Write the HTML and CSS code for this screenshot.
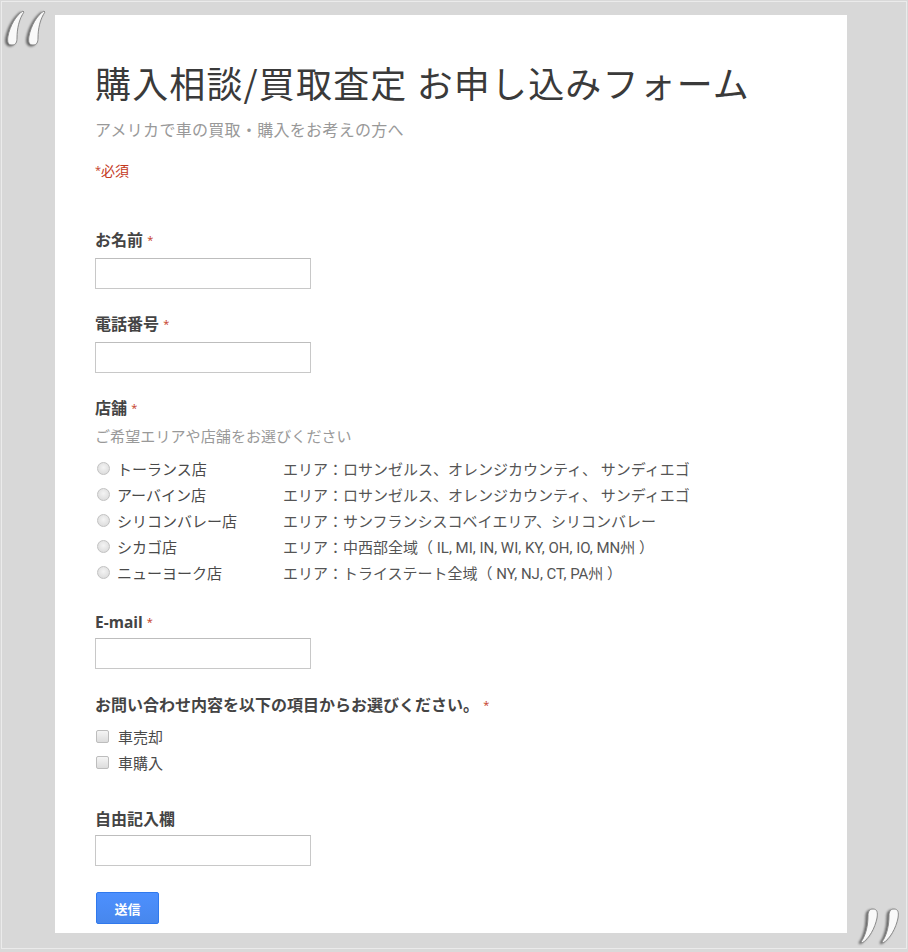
FILE: index.html
```html
<!DOCTYPE html>
<html lang="ja">
<head>
<meta charset="utf-8">
<title>購入相談/買取査定 お申し込みフォーム</title>
<link rel="stylesheet" href="styles.css">
</head>
<body>
<div class="frame">
  <svg class="quote quote-open" width="46" height="38" viewBox="0 0 46 38" aria-hidden="true">
    <path d="M20 2 C13 6 7 17 5 27 C4 33 5 36 9 36 C13 36 14 33 14 29 C14 20 16 10 21 3 Z"/>
    <path d="M41 2 C34 6 28 17 26 27 C25 33 26 36 30 36 C34 36 35 33 35 29 C35 20 37 10 42 3 Z"/>
  </svg>
  <svg class="quote quote-close" width="46" height="38" viewBox="0 0 46 38" aria-hidden="true">
    <path d="M26 36 C33 32 39 21 41 11 C42 5 41 2 37 2 C33 2 32 5 32 9 C32 18 30 28 25 35 Z"/>
    <path d="M5 36 C12 32 18 21 20 11 C21 5 20 2 16 2 C12 2 11 5 11 9 C11 18 9 28 4 35 Z"/>
  </svg>
  <div class="panel">
    <h1 class="title">購入相談/買取査定 お申し込みフォーム</h1>
    <p class="subtitle">アメリカで車の買取・購入をお考えの方へ</p>
    <p class="required-note"><span class="star">*</span>必須</p>

    <div class="field field-first">
      <div class="label">お名前 <span class="star">*</span></div>
      <div class="input"></div>
    </div>

    <div class="field">
      <div class="label">電話番号 <span class="star">*</span></div>
      <div class="input"></div>
    </div>

    <div class="field">
      <div class="label">店舗 <span class="star">*</span></div>
      <div class="help">ご希望エリアや店舗をお選びください</div>
      <ul class="options">
        <li class="option"><span class="radio"></span><span class="store">トーランス店</span><span class="area">エリア：ロサンゼルス、オレンジカウンティ、 サンディエゴ</span></li>
        <li class="option"><span class="radio"></span><span class="store">アーバイン店</span><span class="area">エリア：ロサンゼルス、オレンジカウンティ、 サンディエゴ</span></li>
        <li class="option"><span class="radio"></span><span class="store">シリコンバレー店</span><span class="area">エリア：サンフランシスコベイエリア、シリコンバレー</span></li>
        <li class="option"><span class="radio"></span><span class="store">シカゴ店</span><span class="area">エリア：中西部全域（ IL, MI, IN, WI, KY, OH, IO, MN州 ）</span></li>
        <li class="option"><span class="radio"></span><span class="store">ニューヨーク店</span><span class="area">エリア：トライステート全域（ NY, NJ, CT, PA州 ）</span></li>
      </ul>
    </div>

    <div class="field field-email">
      <div class="label label-latin">E-mail <span class="star">*</span></div>
      <div class="input input-email"></div>
    </div>

    <div class="field field-question">
      <div class="label">お問い合わせ内容を以下の項目からお選びください。 <span class="star">*</span></div>
      <ul class="checks">
        <li class="check-row"><span class="checkbox"></span>車売却</li>
        <li class="check-row"><span class="checkbox"></span>車購入</li>
      </ul>
    </div>

    <div class="field field-free">
      <div class="label">自由記入欄</div>
      <div class="input input-tight"></div>
    </div>

    <button class="submit" type="button">送信</button>
  </div>
</div>
</body>
</html>
```
FILE: styles.css
```css
html, body {
  margin: 0;
  padding: 0;
  background: #d9d9d9;
}
body {
  font-family: "Open Sans", "Noto Sans CJK JP", sans-serif;
  color: #444;
}
.frame {
  position: relative;
  box-sizing: border-box;
  width: 906px;
  height: 948px;
  margin: 1px 0 0 1px;
  border: 1px solid #ebebeb;
  background: #d8d8d8;
  padding: 13px 0 0 53px;
  overflow: hidden;
}
.quote {
  position: absolute;
  fill: #f9f9f9;
  stroke: #8c8c8c;
  stroke-width: 1;
  filter: drop-shadow(-1.5px 1px 1px rgba(60, 60, 60, 0.75));
}
.quote-open {
  left: 1px;
  top: 7px;
}
.quote-close {
  left: 855px;
  top: 905px;
}
.panel {
  box-sizing: border-box;
  width: 792px;
  height: 918px;
  background: #fff;
  padding: 39px 0 0 40px;
  display: flex;
  flex-direction: column;
  align-items: flex-start;
}
.title {
  margin: 0;
  font-family: "Noto Sans CJK JP", sans-serif;
  font-weight: 400;
  font-size: 36px;
  line-height: 56px;
  color: #3a3a3a;
  letter-spacing: 1.15px;
}
.subtitle {
  margin: 8px 0 0;
  font-size: 16px;
  line-height: 24px;
  color: #999;
  letter-spacing: 0.3px;
}
.required-note {
  margin: 18px 0 0;
  font-size: 14px;
  line-height: 20px;
  color: #c4391d;
}
.star {
  color: #c4391d;
  font-size: 11px;
  font-weight: 400;
  vertical-align: 2px;
}
.field {
  margin-top: 25px;
  display: flex;
  flex-direction: column;
}
.field-first {
  margin-top: 49px;
}
.field-email {
  margin-top: 27px;
}
.field-question {
  margin-top: 26px;
}
.field-free {
  margin-top: 33px;
}
.label {
  font-size: 16px;
  font-weight: 700;
  line-height: 20px;
  color: #444;
}
.label-latin {
  font-size: 15.5px;
}
.input {
  box-sizing: border-box;
  width: 216px;
  height: 31px;
  margin-top: 8px;
  border: 1px solid #c8c8c8;
  border-top-color: #bdbdbd;
  background: #fff;
}
.input-email {
  margin-top: 6px;
}
.input-tight {
  margin-top: 6px;
}
.help {
  margin-top: 8px;
  font-size: 15px;
  line-height: 20px;
  color: #999;
  letter-spacing: 0.1px;
}
.options, .checks {
  list-style: none;
  margin: 9px 0 0;
  padding: 0;
}
.checks {
  margin-top: 8px;
}
.option {
  display: grid;
  grid-template-columns: 22px 166px auto;
  align-items: center;
  height: 26px;
  font-size: 15px;
  color: #4a4a4a;
}
.radio {
  box-sizing: border-box;
  width: 13px;
  height: 13px;
  margin-left: 2px;
  border-radius: 50%;
  border: 1px solid #c2c2c2;
  background: radial-gradient(circle at 50% 40%, #f4f4f4 0%, #dedede 75%);
}
.area {
  font-family: "Roboto", "Noto Sans CJK JP", sans-serif;
  font-size: 15px;
  color: #555;
}
.check-row {
  display: flex;
  align-items: center;
  height: 26.5px;
  font-size: 15px;
  color: #4a4a4a;
}
.checkbox {
  box-sizing: border-box;
  width: 13px;
  height: 13px;
  margin: 0 9px 0 1px;
  border-radius: 2px;
  border: 1px solid #bdbdbd;
  background: linear-gradient(#f5f5f5, #dcdcdc);
}
.submit {
  margin-top: 26px;
  margin-left: 1px;
  width: 63px;
  height: 32px;
  border: 1px solid #3079ed;
  border-radius: 2px;
  background: linear-gradient(#4d90fe, #4787ed);
  color: #fff;
  font-family: "Noto Sans CJK JP", sans-serif;
  font-weight: 700;
  font-size: 13px;
  padding: 0;
}
```
